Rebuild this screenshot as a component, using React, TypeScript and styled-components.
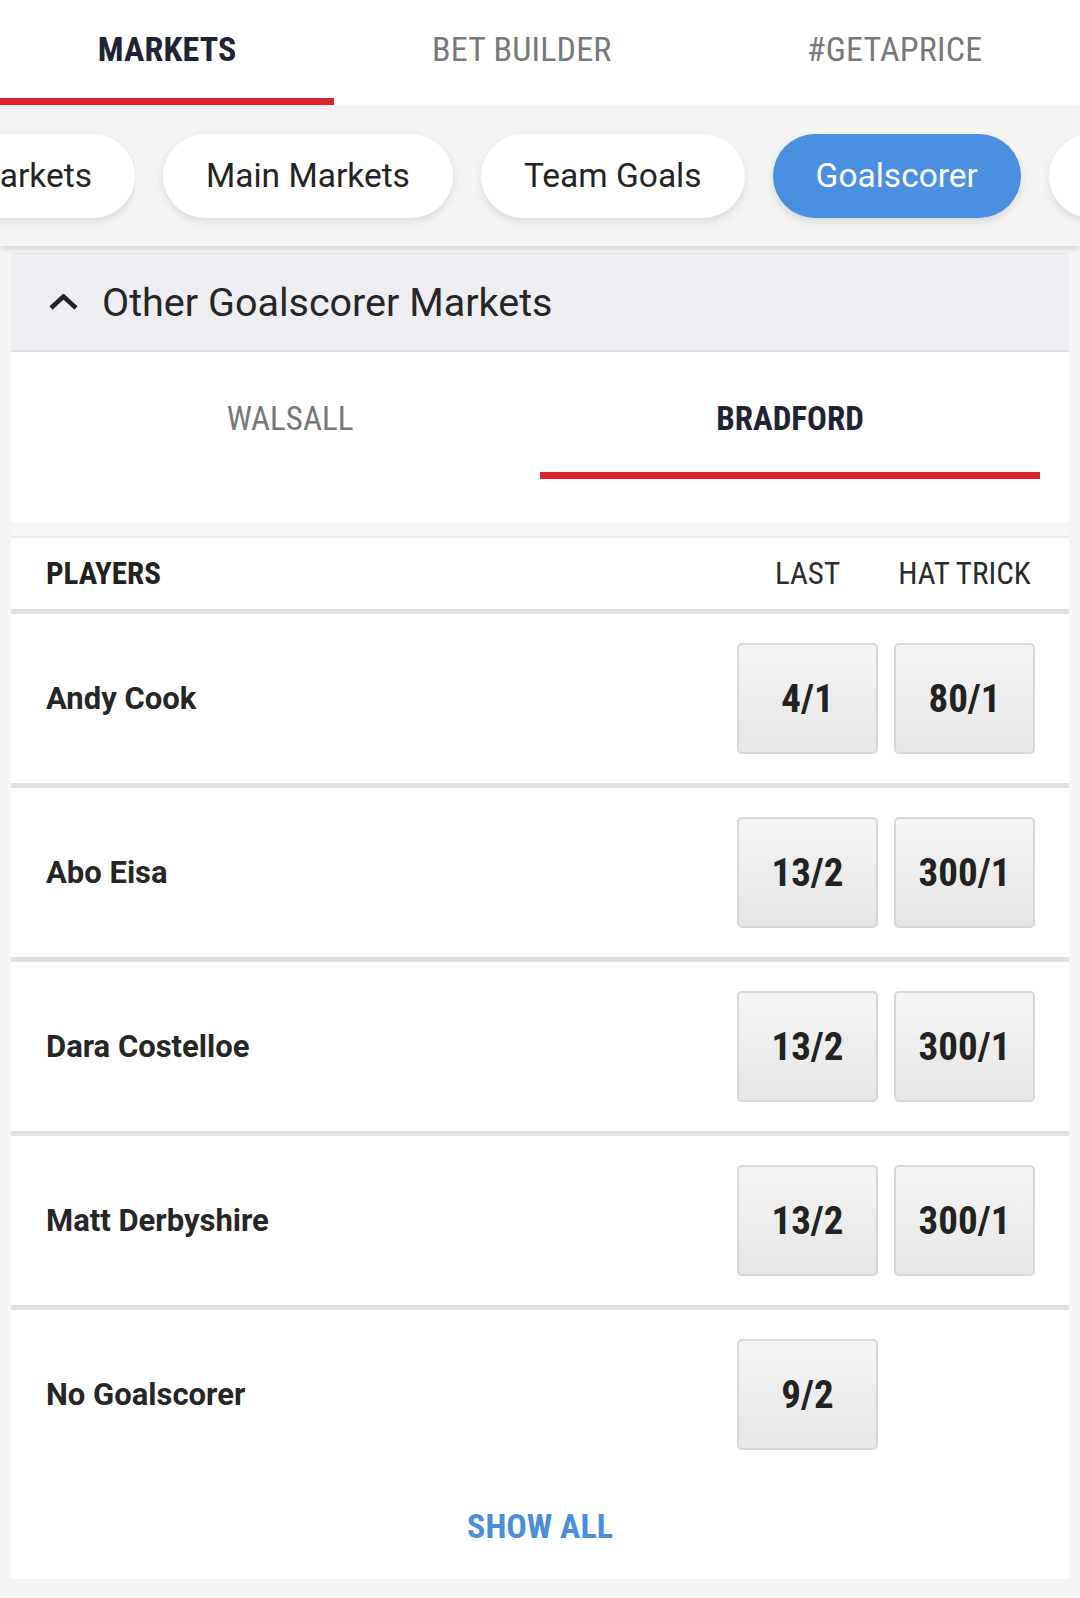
import React from 'react';
import styled, { createGlobalStyle } from 'styled-components';

const condensed = `"Roboto Condensed", Roboto, "Liberation Sans", sans-serif`;

const GlobalStyle = createGlobalStyle`
  * { box-sizing: border-box; }
  body {
    margin: 0;
    background: #f5f5f5;
    font-family: Roboto, "Liberation Sans", sans-serif;
    color: #262626;
    overflow: hidden;
  }
`;

const Page = styled.div`
  width: 1080px;
  min-height: 1598px;
  background: #f5f5f5;
`;

const TopTabs = styled.div`
  display: flex;
  height: 105px;
  background: #fff;
`;

const TopTab = styled.div<{ $active?: boolean }>`
  flex: 1 1 auto;
  display: flex;
  align-items: center;
  justify-content: center;
  border-bottom: 7px solid ${(p) => (p.$active ? '#dc2430' : 'transparent')};
  font-family: ${condensed};
  font-stretch: condensed;
  font-size: 34px;
  font-weight: ${(p) => (p.$active ? 700 : 400)};
  color: ${(p) => (p.$active ? '#1f2433' : '#787878')};
  letter-spacing: 0.2px;
`;

const PillBar = styled.div`
  position: relative;
  z-index: 1;
  display: flex;
  align-items: center;
  gap: 28px;
  height: 141px;
  background: #f4f4f4;
  overflow: hidden;
  box-shadow: 0 3px 5px rgba(0, 0, 0, 0.14);
`;

const PillClip = styled.div`
  flex: 0 0 135px;
  min-width: 0;
  width: 135px;
  display: flex;
  justify-content: flex-end;
  overflow-x: clip;
`;

const Pill = styled.div<{ $active?: boolean }>`
  flex: 0 0 auto;
  height: 84px;
  padding: 0 43px;
  display: flex;
  align-items: center;
  border-radius: 42px;
  background: ${(p) => (p.$active ? '#4a8fe0' : '#fff')};
  color: ${(p) => (p.$active ? '#fff' : '#242424')};
  font-size: 33.5px;
  white-space: nowrap;
  box-shadow: 0 4px 8px rgba(0, 0, 0, 0.11);
`;

const Panel = styled.div`
  margin: 7px 11px 20px;
  background: #f7f7f7;
  display: flex;
  flex-direction: column;
`;

const MarketHeader = styled.div`
  height: 99px;
  display: flex;
  align-items: center;
  gap: 23px;
  padding-left: 37px;
  background: #eeeef2;
  border-top: 1px solid #e2e2e6;
  border-bottom: 2px solid #dcdce1;
  font-size: 39.5px;
  color: #262626;
`;

const TeamTabs = styled.div`
  display: flex;
  padding: 0 29px 43px;
  background: #fff;
`;

const TeamTab = styled.div<{ $active?: boolean }>`
  flex: 1;
  height: 127px;
  padding-top: 12px;
  display: flex;
  align-items: center;
  justify-content: center;
  border-bottom: 7px solid ${(p) => (p.$active ? '#dc2430' : 'transparent')};
  font-family: ${condensed};
  font-stretch: condensed;
  font-size: 33px;
  font-weight: ${(p) => (p.$active ? 700 : 400)};
  color: ${(p) => (p.$active ? '#1f2433' : '#777')};
`;

const Table = styled.div`
  margin-top: 14px;
  border-top: 2px solid #ebebeb;
  background: #fff;
`;

const TableHead = styled.div`
  height: 76px;
  display: flex;
  align-items: center;
  gap: 16px;
  padding: 0 34px 0 35px;
  border-bottom: 5px solid #dfe0e6;
  font-family: ${condensed};
  font-stretch: condensed;
  font-size: 31px;
`;

const HeadLabel = styled.div`
  flex: 1;
  font-weight: 700;
  color: #222;
`;

const HeadCol = styled.div`
  width: 141px;
  text-align: center;
  color: #2c2c2c;
  white-space: nowrap;
`;

const Row = styled.div<{ $last?: boolean }>`
  height: ${(p) => (p.$last ? 169 : 174)}px;
  display: flex;
  align-items: center;
  gap: 16px;
  padding: 0 34px 0 35px;
  border-bottom: ${(p) => (p.$last ? 'none' : '5px solid #dfe0e6')};
`;

const PlayerName = styled.div`
  flex: 1;
  font-size: 31px;
  font-weight: 700;
  color: #262626;
`;

const OddsButton = styled.div`
  width: 141px;
  height: 111px;
  display: flex;
  align-items: center;
  justify-content: center;
  border: 2px solid #d8d8d8;
  border-radius: 5px;
  background: linear-gradient(#f4f4f4, #e6e6e6);
  font-family: ${condensed};
  font-stretch: condensed;
  font-size: 39px;
  font-weight: 700;
  color: #222;
`;

const EmptyCell = styled.div`
  width: 141px;
`;

const ShowAll = styled.div`
  height: 100px;
  padding-bottom: 6px;
  display: flex;
  align-items: center;
  justify-content: center;
  font-family: ${condensed};
  font-stretch: condensed;
  font-size: 34px;
  font-weight: 700;
  color: #4a8fd8;
`;

const Chevron = () => (
  <svg width="31" height="16" viewBox="0 0 31 16">
    <polyline points="3,14 15.5,2.5 28,14" fill="none" stroke="#222" strokeWidth="4.5" />
  </svg>
);

const players = [
  { name: 'Andy Cook', last: '4/1', hat: '80/1' },
  { name: 'Abo Eisa', last: '13/2', hat: '300/1' },
  { name: 'Dara Costelloe', last: '13/2', hat: '300/1' },
  { name: 'Matt Derbyshire', last: '13/2', hat: '300/1' },
  { name: 'No Goalscorer', last: '9/2' },
];

export default function App() {
  return (
    <Page>
      <GlobalStyle />
      <TopTabs>
        <TopTab $active>MARKETS</TopTab>
        <TopTab>BET BUILDER</TopTab>
        <TopTab>#GETAPRICE</TopTab>
      </TopTabs>

      <PillBar>
        <PillClip>
          <Pill>All Markets</Pill>
        </PillClip>
        <Pill>Main Markets</Pill>
        <Pill>Team Goals</Pill>
        <Pill $active>Goalscorer</Pill>
        <Pill>Cards</Pill>
      </PillBar>

      <Panel>
        <MarketHeader>
          <Chevron />
          Other Goalscorer Markets
        </MarketHeader>
        <TeamTabs>
          <TeamTab>WALSALL</TeamTab>
          <TeamTab $active>BRADFORD</TeamTab>
        </TeamTabs>
        <Table>
          <TableHead>
            <HeadLabel>PLAYERS</HeadLabel>
            <HeadCol>LAST</HeadCol>
            <HeadCol>HAT TRICK</HeadCol>
          </TableHead>
          {players.map((p, i) => (
            <Row key={p.name} $last={i === players.length - 1}>
              <PlayerName>{p.name}</PlayerName>
              <OddsButton>{p.last}</OddsButton>
              {p.hat ? <OddsButton>{p.hat}</OddsButton> : <EmptyCell />}
            </Row>
          ))}
          <ShowAll>SHOW ALL</ShowAll>
        </Table>
      </Panel>
    </Page>
  );
}
